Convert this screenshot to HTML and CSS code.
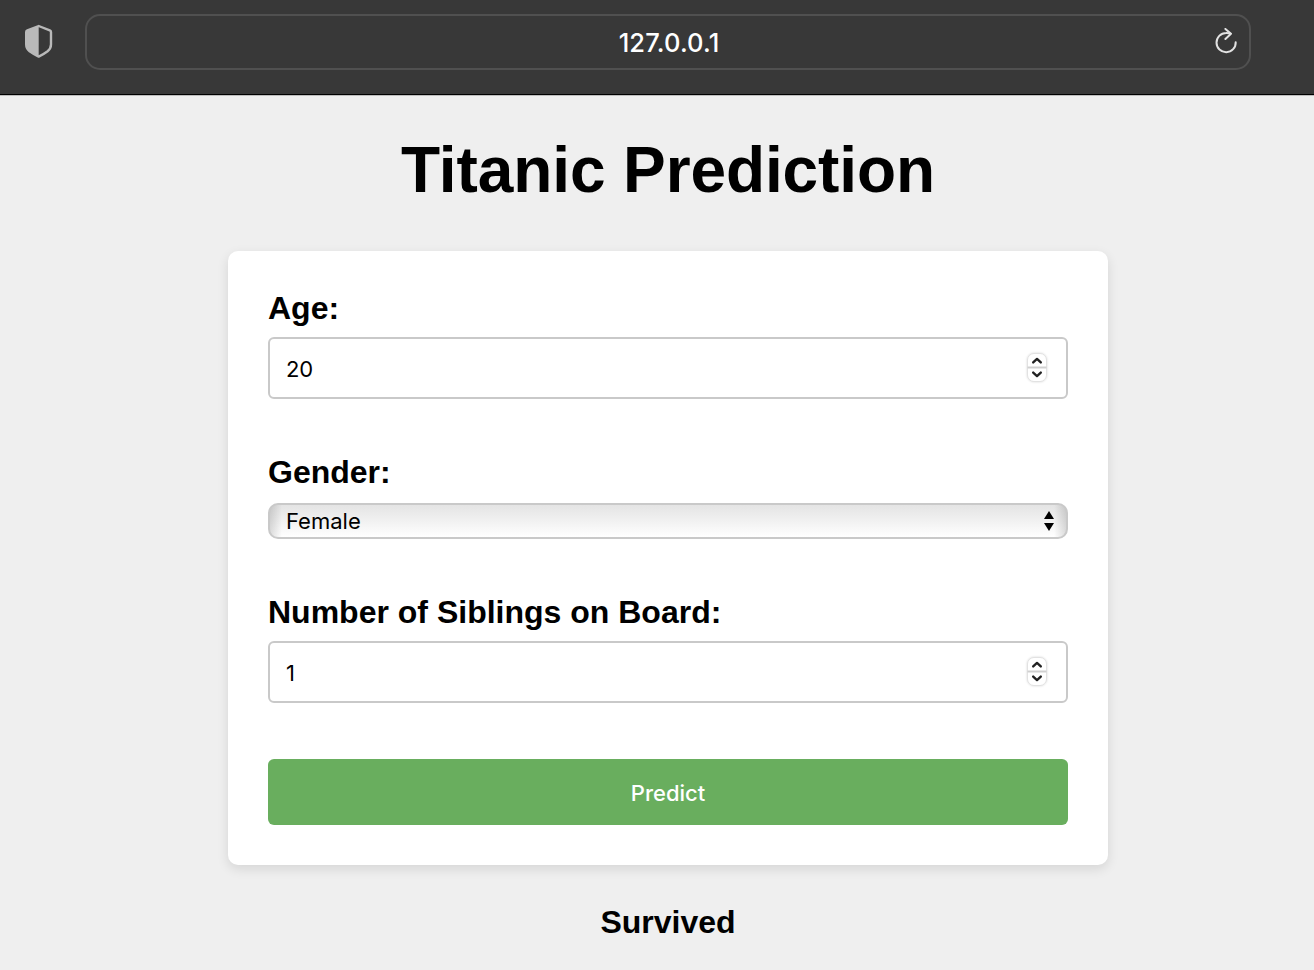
FILE: index.html
```html
<!DOCTYPE html>
<html lang="en">
<head>
<meta charset="utf-8">
<title>Titanic Prediction</title>
<link rel="stylesheet" href="styles.css">
</head>
<body>
<header class="toolbar">
  <svg class="shield" width="30" height="36" viewBox="0 0 30 36">
    <path d="M14.700 3 L25.800 7.300 Q27 7.800 27 9 V21.500 Q27 25.500 23.600 28.200 Q19.500 31.300 14.700 33.600 Q10 31.300 5.600 28.200 Q2.200 25.500 2.200 21.500 V9 Q2.200 7.800 3.400 7.300 Z" fill="none" stroke="#b9b9b9" stroke-width="2.400" stroke-linejoin="round"/>
    <path d="M14.700 3 L3.400 7.300 Q2.200 7.800 2.200 9 V21.500 Q2.200 25.500 5.600 28.200 L14.700 33.600 Z" fill="#b9b9b9"/>
  </svg>
  <div class="address">
    <span class="url">127.0.0.1</span>
    <svg class="reload" width="24" height="28" viewBox="0 0 24 28" fill="none" stroke="#e2e2e2" stroke-width="2" stroke-linecap="round" stroke-linejoin="round">
      <path d="M21.700 14.200 A9.600 9.600 0 1 1 12.100 5 Q14.500 4.900 16.300 5.600"/>
      <path d="M11.400 0.900 L17 5.700 L11.400 11"/>
    </svg>
  </div>
</header>
<main class="page">
  <h1 class="title"><span class="title-text">Titanic Prediction</span></h1>
  <form class="card">
    <div class="field field-age">
      <label class="label">Age:</label>
      <div class="input">
        <span class="value">20</span>
        <svg class="stepper" width="20" height="29" viewBox="0 0 20 29"><rect class="stepper-box" x="0.500" y="0.500" width="19" height="28" rx="6.500"/><path class="stepper-line" d="M0.500 14.500H19.500"/><path class="stepper-arrow" d="M6.200 9.400L10 5.900L13.800 9.400M6.200 19.600L10 23.100L13.800 19.600"/></svg>
      </div>
    </div>
    <div class="field field-gender">
      <label class="label">Gender:</label>
      <div class="select">
        <span class="value">Female</span>
        <svg width="10" height="20" viewBox="0 0 10 20"><path d="M5 0L10 8H0ZM0 12H10L5 20Z"/></svg>
      </div>
    </div>
    <div class="field field-siblings">
      <label class="label">Number of Siblings on Board:</label>
      <div class="input">
        <span class="value">1</span>
        <svg class="stepper" width="20" height="29" viewBox="0 0 20 29"><rect class="stepper-box" x="0.500" y="0.500" width="19" height="28" rx="6.500"/><path class="stepper-line" d="M0.500 14.500H19.500"/><path class="stepper-arrow" d="M6.200 9.400L10 5.900L13.800 9.400M6.200 19.600L10 23.100L13.800 19.600"/></svg>
      </div>
    </div>
    <button class="predict" type="button">Predict</button>
  </form>
  <p class="result">Survived</p>
</main>
</body>
</html>
```
FILE: styles.css
```css
* { box-sizing: border-box; }
body {
  margin: 0;
  height: 970px;
  overflow: hidden;
  background: #efefef;
  color: #000;
  font-family: "Liberation Sans", Arial, sans-serif;
}
.toolbar {
  display: flex;
  align-items: flex-start;
  height: 95px;
  padding: 14px 63px 0 24px;
  background: #383838;
  border-bottom: 1px solid #000;
  box-shadow: 0 1px 0 #bdbdbd;
}
.shield { margin: 9px 31px 0 0; flex: none; }
.address {
  flex: 1;
  display: flex;
  align-items: center;
  height: 56px;
  padding: 0 11px 0 37px;
  border: 2px solid #505050;
  border-radius: 15px;
}
.url {
  flex: 1;
  padding-top: 2px;
  text-align: center;
  color: #fff;
  font: 500 25.5px/30px Inter, sans-serif;
  letter-spacing: 0.15px;
}
.page {
  display: flex;
  flex-direction: column;
  align-items: center;
  width: 880px;
  margin: 38px 0 0 228px;
}
.title { margin: 0; font-size: 64px; line-height: 74px; letter-spacing: -0.1px; }
.card {
  width: 880px;
  height: 614px;
  margin: 44px 0 0;
  padding: 39px 40px 40px;
  background: #fff;
  border-radius: 10px;
  box-shadow: 0 4px 12px rgba(0, 0, 0, 0.11);
}
.label {
  display: block;
  margin-bottom: 10px;
  font-size: 32px;
  font-weight: 700;
  line-height: 37px;
}
.field-age { margin-bottom: 55px; }
.field-gender { margin-bottom: 55px; }
.field-gender .label { margin-bottom: 12px; }
.field-siblings { margin-bottom: 56px; }
.input, .select {
  display: flex;
  align-items: center;
  justify-content: space-between;
  border: 2px solid #c9c9c9;
  font: 22px/28px Inter, sans-serif;
  letter-spacing: -0.2px;
}
.input { height: 62px; padding: 0 19px 0 16px; border-radius: 6px; }
.value { padding-top: 2px; }
.stepper { margin-bottom: 2px; filter: drop-shadow(0 0 1px rgba(0, 0, 0, 0.15)); }
.stepper-box { fill: #fff; stroke: #e2e2e2; }
.stepper-line { stroke: #d0d0d0; stroke-width: 2; }
.stepper-arrow { fill: none; stroke: #222; stroke-width: 2.4; stroke-linecap: round; stroke-linejoin: round; }
.select {
  height: 36px;
  padding: 0 12px 0 16px;
  border-radius: 10px;
  background:
    linear-gradient(90deg, rgba(0, 0, 0, 0.13), transparent 12px, transparent calc(100% - 12px), rgba(0, 0, 0, 0.13)),
    linear-gradient(#e4e4e4, #f1f1f1 50%, #fff);
}
.select .value { padding-top: 0; letter-spacing: 0; }
.predict {
  display: block;
  width: 100%;
  height: 66px;
  padding: 2px 0 0;
  border: 0;
  border-radius: 6px;
  background: #69ae5e;
  color: #fff;
  font: 500 22px/28px Inter, sans-serif;
}
.result { margin: 39px 0 0; font-size: 32px; font-weight: 700; line-height: 37px; }
```
